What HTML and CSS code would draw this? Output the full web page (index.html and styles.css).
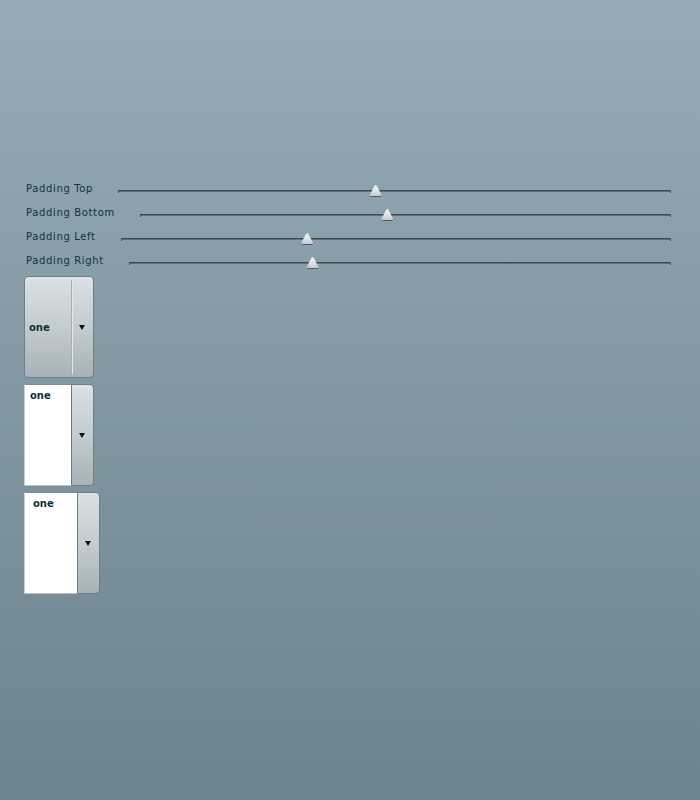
FILE: index.html
```html
<!DOCTYPE html>
<html>
<head>
<meta charset="utf-8">
<link rel="stylesheet" href="styles.css">
</head>
<body>
<div class="page">
  <div class="sliders">
    <div class="row">
      <span class="label">Padding Top</span>
      <div class="slider"><div class="track"></div><div class="thumb" style="left: 46.5%"></div></div>
    </div>
    <div class="row">
      <span class="label">Padding Bottom</span>
      <div class="slider"><div class="track"></div><div class="thumb" style="left: 46.5%"></div></div>
    </div>
    <div class="row">
      <span class="label">Padding Left</span>
      <div class="slider"><div class="track"></div><div class="thumb" style="left: 33.8%"></div></div>
    </div>
    <div class="row">
      <span class="label">Padding Right</span>
      <div class="slider"><div class="track"></div><div class="thumb" style="left: 33.8%"></div></div>
    </div>
  </div>

  <div class="combos">
    <div class="combo combo-button">
      <div class="value">one</div>
      <div class="divider"></div>
      <div class="arrow-cell"><span class="arrow"></span></div>
    </div>

    <div class="combo combo-list">
      <div class="list"><span class="item">one</span></div>
      <div class="btn"><span class="arrow"></span></div>
    </div>

    <div class="combo combo-list wide">
      <div class="list"><span class="item">one</span></div>
      <div class="btn"><span class="arrow"></span></div>
    </div>
  </div>
</div>
</body>
</html>
```

FILE: styles.css
```css
html, body {
  margin: 0;
  padding: 0;
}
body {
  width: 700px;
  height: 800px;
  background: linear-gradient(to bottom, #97acb6 0%, #6c828c 100%);
  font-family: "DejaVu Sans", Verdana, sans-serif;
  overflow: hidden;
}
.page {
  padding: 177px 0 0 24px;
}
.sliders {
  display: flex;
  flex-direction: column;
  width: 647px;
}
.row {
  display: flex;
  align-items: center;
  height: 24px;
}
.label {
  padding-left: 2px;
  font-size: 10px;
  letter-spacing: 0.65px;
  color: #0f3238;
  white-space: nowrap;
  line-height: 12px;
}
.slider {
  position: relative;
  flex: 1;
  margin-left: 25px;
  height: 24px;
}
.track {
  position: absolute;
  left: 0;
  right: 0;
  top: 13px;
  height: 1px;
  background: #3c4a52;
  border-bottom: 1px solid #5d6f77;
}
.track::before,
.track::after {
  content: "";
  position: absolute;
  top: 0;
  width: 1px;
  height: 3px;
  background: #3c4a52;
}
.track::before { left: 0; }
.track::after { right: 0; }
.thumb {
  position: absolute;
  top: 8px;
  width: 11px;
  height: 12px;
  margin-left: -5px;
  background:
    linear-gradient(to bottom, #f2f4f5 0%, #d9dfe2 60%, #b9c3c8 100%);
  clip-path: polygon(50% 0, 62% 8%, 100% 78%, 100% 100%, 0 100%, 0 78%, 38% 8%);
}
.thumb::after {
  content: "";
  position: absolute;
  left: 0;
  right: 0;
  bottom: 0;
  height: 1px;
  background: #4c5a61;
}

.combos {
  display: flex;
  flex-direction: column;
  align-items: flex-start;
  gap: 6px;
  margin-top: 3px;
}
.combo {
  display: flex;
  height: 102px;
  box-sizing: border-box;
}
.combo-button {
  width: 70px;
  border: 1px solid #6f7e86;
  border-radius: 4px;
  background: linear-gradient(to bottom, #dbe1e4 0%, #c3ccd0 50%, #a7b3b9 100%);
  align-items: stretch;
}
.value {
  width: 42px;
  padding-left: 4px;
  display: flex;
  align-items: center;
  font-size: 10px;
  font-weight: bold;
  color: #0f2f37;
}
.divider {
  width: 1px;
  margin: 3px 0;
  background: #a4b0b6;
  border-right: 1px solid #e2e7ea;
}
.arrow-cell {
  flex: 1;
  display: flex;
  align-items: center;
  justify-content: center;
  padding-right: 2px;
}
.arrow {
  width: 0;
  height: 0;
  border-left: 3.5px solid transparent;
  border-right: 3.5px solid transparent;
  border-top: 5px solid #111;
}
.combo-list {
  width: 70px;
}
.combo-list.wide {
  width: 76px;
}
.list {
  width: 47px;
  box-sizing: border-box;
  background: #fff;
  border-top: 1px solid #7b8990;
  border-left: 1px solid #c9d0d3;
  border-bottom: 1px solid #b7c0c4;
  padding: 5px 0 0 5px;
  font-size: 10px;
  line-height: 12px;
}
.wide .list {
  width: 53px;
  padding-left: 8px;
  padding-top: 5px;
}
.item {
  font-size: 10px;
  font-weight: bold;
  color: #0f2f37;
  line-height: 12px;
}
.btn {
  flex: 1;
  border: 1px solid #6f7e86;
  border-radius: 0 4px 4px 0;
  background: linear-gradient(to bottom, #dbe1e4 0%, #c3ccd0 50%, #a7b3b9 100%);
  display: flex;
  align-items: center;
  justify-content: center;
  padding-right: 2px;
}
```
